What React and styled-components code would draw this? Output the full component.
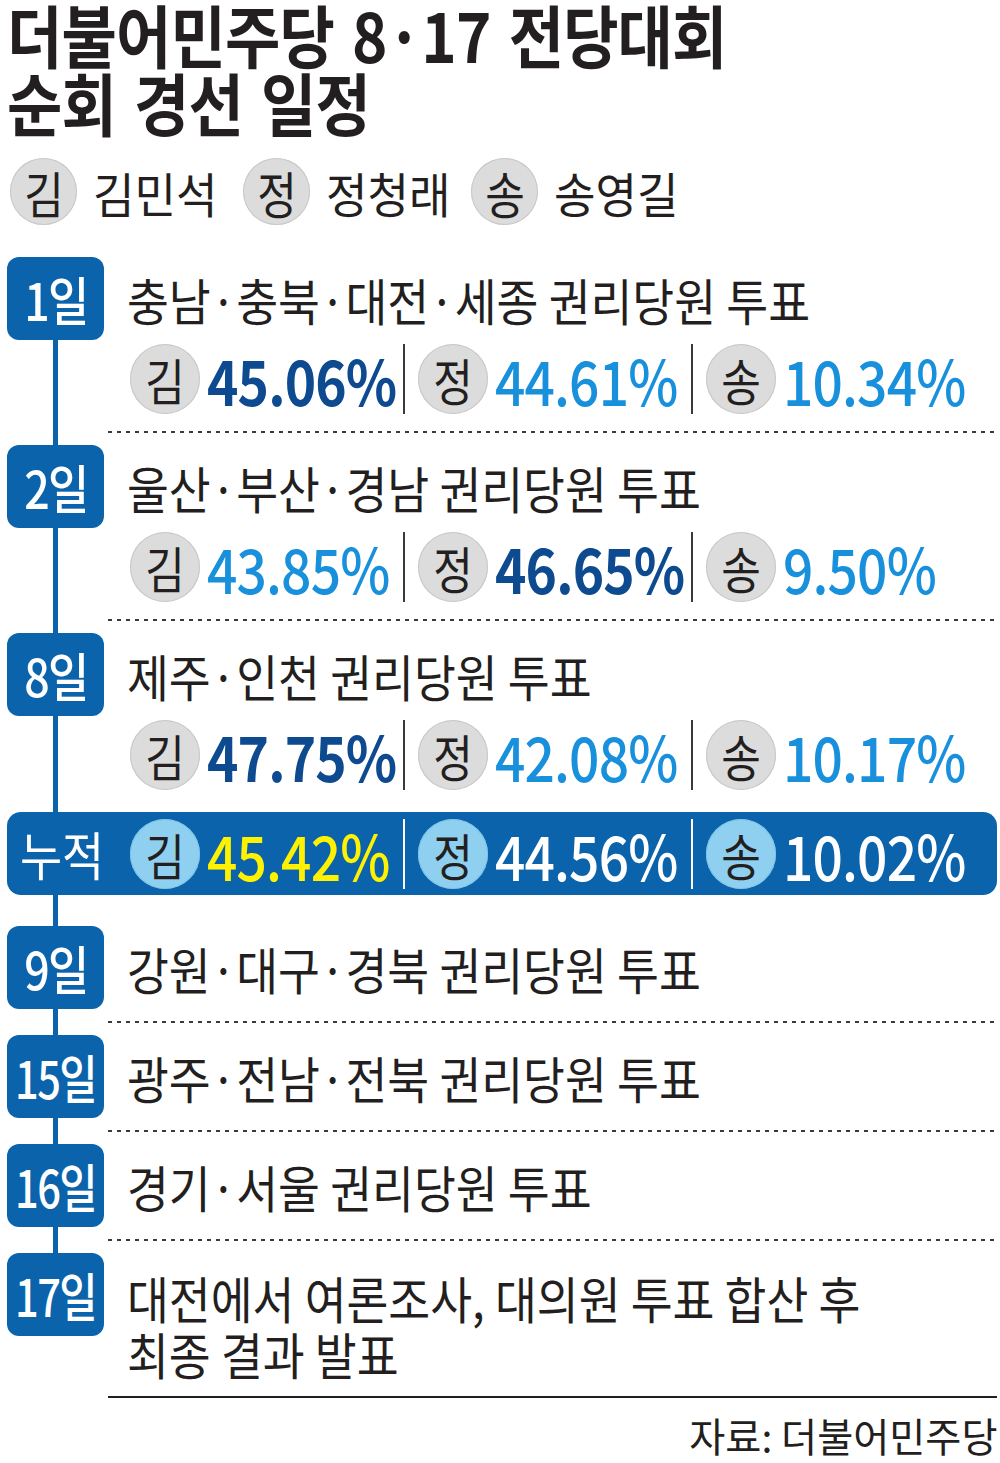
import React from "react";
import styled, { createGlobalStyle } from "styled-components";

const GlobalStyle = createGlobalStyle`
  body {
    margin: 0;
    background: #ffffff;
    font-family: "Noto Sans CJK KR", "Noto Sans", sans-serif;
    color: #231f20;
  }
`;

const BLUE = "#0b64ab";
const NAVY = "#0d4a8f";
const SKY = "#1990dc";

const Page = styled.div`
  width: 1000px;
  padding: 0 3px 0 7px;
  box-sizing: border-box;
`;

// the print font is a condensed face, so text is narrowed horizontally
const Squeeze = styled.span`
  display: inline-block;
  white-space: nowrap;
  transform: scaleX(${(p) => p.$x || 0.86});
  transform-origin: ${(p) => p.$o || "left"} center;
`;

const Title = styled.h1`
  margin: 0;
  font-size: 68px;
  font-weight: 700;
  line-height: 68px;
  letter-spacing: -1px;
  word-spacing: 6px;
`;

const Legend = styled.div`
  display: flex;
  align-items: center;
  gap: 28px;
  margin-top: 22px;
  padding-left: 3px;
`;

const LegendItem = styled.div`
  display: flex;
  align-items: center;
  gap: 16px;
  font-size: 48px;
  line-height: 66px;
  width: ${(p) => p.$w}px;
`;

const Badge = styled.span`
  flex: none;
  display: flex;
  align-items: center;
  justify-content: center;
  width: ${(p) => p.$size || 70}px;
  height: ${(p) => p.$size || 70}px;
  border-radius: 50%;
  background: ${(p) => (p.$light ? "#8fd0f0" : "#dcdcdc")};
  box-shadow: inset 0 0 0 1px ${(p) => (p.$light ? "#7cc3e6" : "#c8c8c8")};
  color: #231f20;
  font-size: 50px;
  line-height: 1;
`;

const Timeline = styled.div`
  position: relative;
  margin-top: 32px;

  &::before {
    content: "";
    position: absolute;
    left: 46px;
    top: 40px;
    bottom: 106px;
    width: 5px;
    background: ${BLUE};
  }
`;

const Row = styled.div`
  position: relative;
  display: flex;
  gap: 4px;
  margin-bottom: ${(p) => (p.$tight ? 3 : 12)}px;
`;

const DayBox = styled.div`
  flex: none;
  width: 97px;
  height: 83px;
  border-radius: 12px;
  background: ${BLUE};
  color: #ffffff;
  display: flex;
  align-items: center;
  justify-content: center;
  font-size: 52px;
  font-weight: 500;
  line-height: 1;
  letter-spacing: -2px;
`;

const Body = styled.div`
  flex: 1;
  padding-bottom: ${(p) => p.$pb}px;
  background: ${(p) =>
    p.$line === "solid"
      ? "linear-gradient(#231f20, #231f20) left bottom / 100% 2px no-repeat"
      : p.$line === "dots"
      ? "linear-gradient(to right, #3a3a3a 45%, transparent 0) left bottom / 9px 2px repeat-x"
      : "none"};
`;

const Place = styled.div`
  min-height: 84px;
  display: flex;
  flex-direction: column;
  justify-content: center;
  padding-left: 19px;
  font-size: 50px;
  line-height: 56px;
  padding-top: ${(p) => (p.$multi ? 16 : 0)}px;
`;

const Results = styled.div`
  display: grid;
  grid-template-columns: 275px 288px 1fr;
  align-items: center;
  flex: 1;
  margin-top: ${(p) => p.$mt || 0}px;
  padding-left: ${(p) => p.$pl || 0}px;
`;

const Cell = styled.div`
  display: flex;
  align-items: center;
  gap: 7px;
  height: 70px;
  padding-left: ${(p) => (p.$first ? 0 : 13)}px;
  border-right: ${(p) =>
    p.$last ? "none" : `2px solid ${p.$dark ? "#ffffff" : "#3a3a3a"}`};
`;

const Num = styled.span`
  font-size: 62px;
  line-height: 1;
  font-weight: ${(p) => (p.$bold ? 700 : 500)};
  color: ${(p) => p.$color};
  letter-spacing: -1px;
`;

const Total = styled.div`
  display: flex;
  align-items: center;
  height: 83px;
  border-radius: 14px;
  background: ${BLUE};
  margin-bottom: 31px;
`;

const TotalLabel = styled.div`
  flex: none;
  width: 123px;
  box-sizing: border-box;
  padding-left: 13px;
  color: #ffffff;
  font-size: 52px;
  line-height: 1;
`;

const Source = styled.div`
  text-align: right;
  font-size: 40px;
  line-height: 50px;
  margin-top: 11px;
`;

const ResultRow = ({ items, dark, pl, mt }) => (
  <Results $pl={pl} $mt={mt}>
    {items.map(([who, pct, lead], i) => (
      <Cell key={who} $first={i === 0} $last={i === 2} $dark={dark}>
        <Badge $light={dark}>
          <Squeeze $x={0.86} $o="center">
            {who}
          </Squeeze>
        </Badge>
        <Num
          $bold={!dark && lead}
          $color={dark ? (lead ? "#fff200" : "#ffffff") : lead ? NAVY : SKY}
        >
          <Squeeze $x={0.86}>{pct}</Squeeze>
        </Num>
      </Cell>
    ))}
  </Results>
);

const before = [
  {
    day: "1일",
    place: "충남·충북·대전·세종 권리당원 투표",
    res: [["김", "45.06%", true], ["정", "44.61%"], ["송", "10.34%"]],
  },
  {
    day: "2일",
    place: "울산·부산·경남 권리당원 투표",
    res: [["김", "43.85%"], ["정", "46.65%", true], ["송", "9.50%"]],
  },
  {
    day: "8일",
    place: "제주·인천 권리당원 투표",
    res: [["김", "47.75%", true], ["정", "42.08%"], ["송", "10.17%"]],
    last: true,
  },
];

const after = [
  { day: "9일", place: ["강원·대구·경북 권리당원 투표"] },
  { day: "15일", place: ["광주·전남·전북 권리당원 투표"] },
  { day: "16일", place: ["경기·서울 권리당원 투표"] },
  {
    day: "17일",
    place: ["대전에서 여론조사, 대의원 투표 합산 후", "최종 결과 발표"],
    end: true,
  },
];

const Day = ({ label }) => (
  <DayBox>
    <Squeeze $x={label.length > 2 ? 0.8 : 0.86} $o="center">
      {label}
    </Squeeze>
  </DayBox>
);

export default function App() {
  return (
    <Page>
      <GlobalStyle />
      <Title>
        <Squeeze $x={0.885}>더불어민주당 8·17 전당대회</Squeeze>
        <br />
        <Squeeze $x={0.885}>순회 경선 일정</Squeeze>
      </Title>

      <Legend>
        {[
          ["김", "김민석", 205],
          ["정", "정청래", 200],
          ["송", "송영길", 200],
        ].map(([k, name, w]) => (
          <LegendItem key={k} $w={w}>
            <Badge $size={67}>
              <Squeeze $x={0.86} $o="center">
                {k}
              </Squeeze>
            </Badge>
            <Squeeze $x={0.94}>{name}</Squeeze>
          </LegendItem>
        ))}
      </Legend>

      <Timeline>
        {before.map((r) => (
          <Row key={r.day} $tight={r.last}>
            <Day label={r.day} />
            <Body $pb={19} $line={r.last ? "none" : "dots"}>
              <Place>
                <Squeeze $x={0.91}>{r.place}</Squeeze>
              </Place>
              <ResultRow items={r.res} pl={22} mt={3} />
            </Body>
          </Row>
        ))}

        <Total>
          <TotalLabel>
            <Squeeze $x={0.88}>누적</Squeeze>
          </TotalLabel>
          <ResultRow
            dark
            items={[["김", "45.42%", true], ["정", "44.56%"], ["송", "10.02%"]]}
          />
        </Total>

        {after.map((r) => (
          <Row key={r.day}>
            <Day label={r.day} />
            <Body $pb={r.end ? 17 : 13} $line={r.end ? "solid" : "dots"}>
              <Place $multi={r.end}>
                {r.place.map((t) => (
                  <div key={t}>
                    <Squeeze $x={0.91}>{t}</Squeeze>
                  </div>
                ))}
              </Place>
            </Body>
          </Row>
        ))}
      </Timeline>

      <Source>
        <Squeeze $x={0.98} $o="right">
          자료: 더불어민주당
        </Squeeze>
      </Source>
    </Page>
  );
}
